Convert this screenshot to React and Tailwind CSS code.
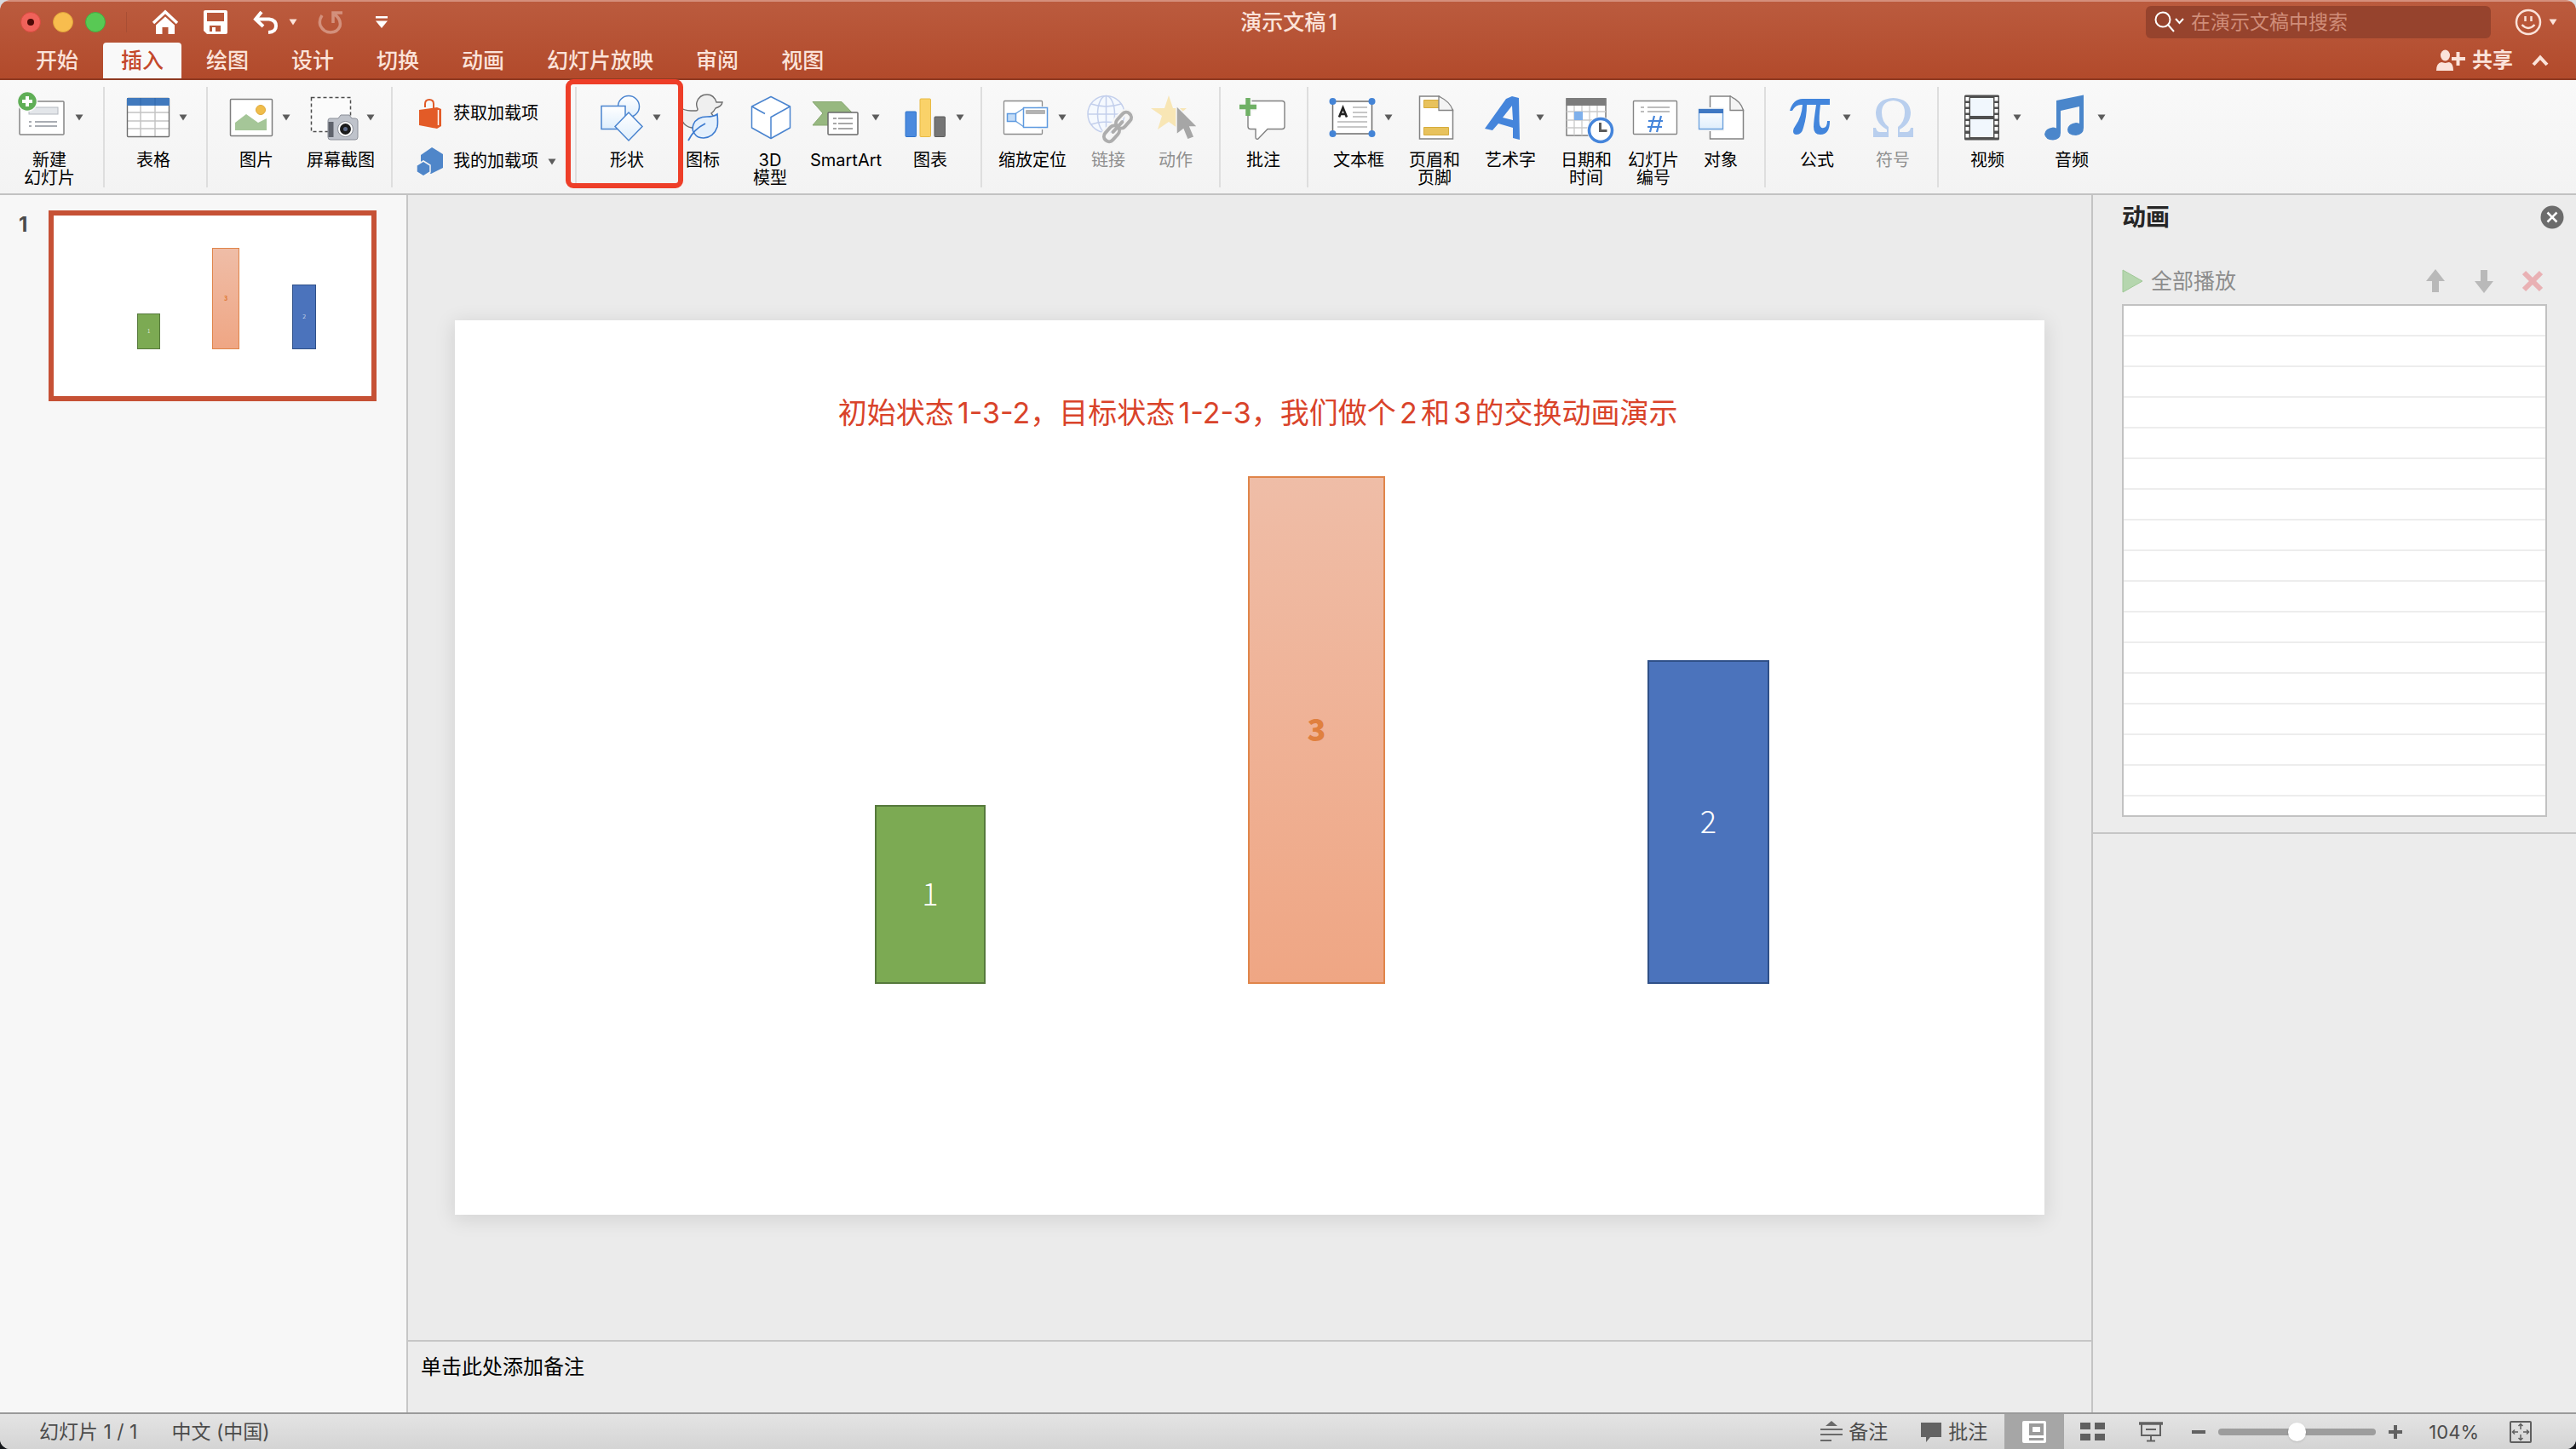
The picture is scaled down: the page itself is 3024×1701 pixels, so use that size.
import React from "react";

const FONT = "font-['Inter','Noto_Sans_CJK_SC',sans-serif]";

function Caret({ className = "text-[#5c5c5c]" }) {
  return (
    <svg width="10" height="8" viewBox="0 0 10 8" className={"shrink-0 " + className} aria-hidden="true">
      <path d="M0.5 0.5h9L5 7.5z" fill="currentColor" />
    </svg>
  );
}

function Icon({ children }) {
  return (
    <svg width="60" height="60" viewBox="0 0 60 60" className="shrink-0 overflow-visible" fill="none" aria-hidden="true">
      {children}
    </svg>
  );
}

/* ---------- ribbon icons (60 x 60 canvas) ---------- */

const icons = {
  newSlide: (
    <Icon>
      <rect x="5" y="11" width="52" height="39" rx="1" fill="#fff" stroke="#858585" strokeWidth="1.5" />
      <rect x="16" y="18" width="34" height="8" fill="#e3e6ea" stroke="#b4b9c0" />
      <path d="M16 35h3M23 35h26M16 40h3M23 40h26" stroke="#8d939a" strokeWidth="1.6" />
      <circle cx="14" cy="11" r="11.5" fill="#5fae56" stroke="#f7f7f7" strokeWidth="1.5" />
      <path d="M14 5v12M8 11h12" stroke="#fff" strokeWidth="4" />
    </Icon>
  ),
  table: (
    <Icon>
      <rect x="9.5" y="7.5" width="49" height="45" rx="1" fill="#fff" />
      <path d="M9 24h50M9 34h50M9 43h50M25 15v38M42 15v38" stroke="#c4c4c4" strokeWidth="1.5" />
      <rect x="9.5" y="7.5" width="49" height="45" rx="1" stroke="#6f6f6f" strokeWidth="1.4" />
      <rect x="9" y="7" width="50" height="9" fill="#4079bd" />
      <path d="M25 7v9M42 7v9" stroke="#2f68ac" />
    </Icon>
  ),
  picture: (
    <Icon>
      <rect x="9.5" y="8.5" width="49" height="43" rx="1" fill="#fff" stroke="#7e7e7e" strokeWidth="1.5" />
      <circle cx="45" cy="21" r="5.5" fill="#f0bd4b" stroke="#e0a93a" />
      <path d="M15 45V36L28 26 42 36 52 31V45z" fill="#a5c698" />
    </Icon>
  ),
  screenshot: (
    <Icon>
      <path d="M5.5 6.5h46v40h-46z" fill="#fbfbfb" stroke="#4d4d4d" strokeWidth="1.5" strokeDasharray="4 3" />
      <path d="M27 31h10l3-4h10l3 4h4q3 0 3 3v19q0 3-3 3H28q-3 0-3-3V34q0-3 2-3z" fill="#bfc3cb" stroke="#8b8f98" />
      <rect x="25.5" y="35" width="6" height="18" fill="#5f636c" />
      <circle cx="45.5" cy="43.5" r="9" fill="#fff" stroke="#8b8f98" />
      <circle cx="45.5" cy="43.5" r="6.5" fill="#1b1b1b" />
      <circle cx="45.5" cy="43.5" r="2.5" fill="#5d6a88" />
    </Icon>
  ),
  shapes: (
    <Icon>
      <defs>
        <linearGradient id="pale" x1="0" y1="0" x2="0" y2="1">
          <stop offset="0" stopColor="#fff" />
          <stop offset="1" stopColor="#dfeefc" />
        </linearGradient>
      </defs>
      <circle cx="42" cy="17" r="12.5" fill="url(#pale)" stroke="#4a84cf" strokeWidth="1.5" />
      <rect x="10" y="16.5" width="28" height="27" fill="url(#pale)" stroke="#4a84cf" strokeWidth="1.5" />
      <path d="M42 24L58 40.5 42 57 26 40.5z" fill="url(#pale)" stroke="#4a84cf" strokeWidth="1.5" />
    </Icon>
  ),
  icons: (
    <Icon>
      <path d="M2 17q6 5 14 5h6q2 0 2-2-2-5-1-8 3-9 12-9 8 0 11 9h7q-1 5-8 7-2 4-5 6l3 4-21 12-5 1q-14-2-15-25z" fill="#efefef" stroke="#6f6f6f" strokeWidth="1.4" />
      <path d="M47 26q1 10 0 15-4 12-16 13-6 0-9-3-6-6-3-13 4-9 16-9 8 0 12-3z" fill="#e4f0fc" stroke="#3c7bd0" strokeWidth="1.6" />
      <path d="M13 57q6-13 20-20" stroke="#3c7bd0" strokeWidth="1.8" />
    </Icon>
  ),
  model: (
    <Icon>
      <path d="M31 5.5L53.5 17v25L31 54.5 8.500 42V17z" fill="#fff" stroke="#4a84cf" strokeWidth="1.5" strokeLinejoin="round" />
      <path d="M53.5 17L31 29.5v25M8.5 17L24 25.5" stroke="#4a84cf" strokeWidth="1.5" />
    </Icon>
  ),
  smartArt: (
    <Icon>
      <path d="M1 11.5h34L48 25v14H1l12-14z" fill="#97b880" stroke="#87a871" />
      <rect x="19" y="24" width="35" height="26" rx="1" fill="#fff" stroke="#6a6a6a" strokeWidth="1.5" />
      <path d="M25 31h4M31 31h17M25 37h4M31 37h17M25 43h4M31 43h17" stroke="#8a8a8a" strokeWidth="1.5" />
    </Icon>
  ),
  chart: (
    <Icon>
      <rect x="11" y="23" width="12.5" height="29.5" rx="1" fill="#4b8ade" stroke="#2f74cb" />
      <rect x="28" y="8" width="12.5" height="44.5" rx="1" fill="#fad269" stroke="#e8ba44" />
      <rect x="45" y="29" width="12.5" height="23.5" rx="1" fill="#757575" stroke="#5b5b5b" />
    </Icon>
  ),
  zoomPlace: (
    <Icon>
      <rect x="6.5" y="10.5" width="45" height="39" rx="1" fill="#fff" stroke="#8b8b8b" strokeWidth="1.3" />
      <path d="M46 17h10v27H46z" fill="#f6f6f6" />
      <path d="M20 25.5L30 19v22l-10-7z" fill="#fff" stroke="#6aa0dd" strokeWidth="1.4" />
      <rect x="10.5" y="25.5" width="10" height="9" fill="#c3dcf7" stroke="#5e9ae0" strokeWidth="1.5" />
      <rect x="29.5" y="18.5" width="28" height="23" fill="#fff" stroke="#5e9ae0" strokeWidth="1.5" />
      <rect x="32" y="21" width="23" height="5" rx="1" fill="#b3b3b3" />
    </Icon>
  ),
  link: (
    <Icon>
      <g stroke="#c3cfec" strokeWidth="1.5">
        <circle cx="27.5" cy="26" r="21.5" fill="#f5f9fe" />
        <path d="M27.5 4.5v43M6 26h43M10 14q17 6 35 0M10 38q17-6 35 0" />
        <ellipse cx="27.5" cy="26" rx="10" ry="21.5" />
      </g>
      <g transform="rotate(-48 41 41)" stroke="#f5f5f5" strokeWidth="8">
        <rect x="20" y="35" width="22" height="12" rx="6" />
        <rect x="40" y="35" width="22" height="12" rx="6" />
      </g>
      <g transform="rotate(-48 41 41)" stroke="#adadad" strokeWidth="4">
        <rect x="20" y="35" width="21" height="12" rx="6" />
        <rect x="41" y="35" width="21" height="12" rx="6" />
        <path d="M33 41h16" strokeLinecap="round" />
      </g>
    </Icon>
  ),
  action: (
    <Icon>
      <path d="M22 4l5 15h16L31 29l5 16-14-10-13 9 5-16L1 19h16z" fill="#f8e6b5" />
      <path d="M31 16v34l8-6 5 12 8-3-5-12h9z" fill="#a6a6a6" stroke="#f6f6f6" strokeWidth="1.5" />
    </Icon>
  ),
  comment: (
    <Icon>
      <path d="M16 10.5h36q3 0 3 3v27q0 3-3 3H35L24 55q-3 1-3-2v-9.5h-6q-3 0-3-3V27" fill="#fff" stroke="#808080" strokeWidth="1.4" />
      <path d="M12 7v21M2 17.5h20" stroke="#f6f6f6" strokeWidth="9" />
      <path d="M12 7v21M2 17.5h20" stroke="#6fb065" strokeWidth="5.5" />
    </Icon>
  ),
  textBox: (
    <Icon>
      <rect x="9.5" y="11" width="46" height="38" fill="#fff" stroke="#6e6e6e" strokeWidth="1.5" />
      <path d="M33 18h17M33 24h17M33 29h17M15 35h35M15 41h35" stroke="#b5b5b5" strokeWidth="1.5" />
      <path d="M17 29.5L21.5 18.5 26 29.5M18.5 26h6.5" stroke="#222" strokeWidth="2.6" />
      <g fill="#4484d6">
        <circle cx="9.5" cy="11" r="4" /><circle cx="55.5" cy="11" r="4" />
        <circle cx="9.5" cy="49" r="4" /><circle cx="55.5" cy="49" r="4" />
      </g>
    </Icon>
  ),
  headerFooter: (
    <Icon>
      <path d="M12.5 5h23L51.5 21v34h-39z" fill="#fff" stroke="#838383" strokeWidth="1.5" />
      <path d="M17.5 9.5h18v9h-18zM17.5 41.5h29v9h-29z" fill="#e8c25c" stroke="#d6ac3c" />
      <path d="M35 5v16.5h16.5q-3-10-16.5-16.5z" fill="#f4f4f4" stroke="#838383" strokeWidth="1.3" />
    </Icon>
  ),
  wordArt: (
    <Icon>
      <path fillRule="evenodd" d="M42 5l8 2 1 49-8-2V42L26 37l-7 8-9-2L35 8zM42 16L31 30l12 3z" fill="#4585db" />
    </Icon>
  ),
  dateTime: (
    <Icon>
      <rect x="7" y="8" width="46" height="43" fill="#fff" stroke="#7e7e7e" strokeWidth="1.5" />
      <path d="M16 15v36M25 15v36M34 15v36M43 15v36M7 23h46M7 33h46M7 42h46" stroke="#cacaca" strokeWidth="1.3" />
      <rect x="6.5" y="7" width="47" height="9" fill="#7c7c7c" />
      <rect x="16" y="23" width="10" height="10" fill="#7fb0eb" />
      <circle cx="47" cy="45" r="16" fill="#f6f6f6" />
      <circle cx="47" cy="45" r="13.5" fill="#fff" stroke="#4585db" strokeWidth="3.5" />
      <path d="M46.5 36v9.5h8" stroke="#5b5b5b" strokeWidth="3" />
    </Icon>
  ),
  slideNumber: (
    <Icon>
      <rect x="6.5" y="10.5" width="51" height="39" rx="1" fill="#fff" stroke="#868686" strokeWidth="1.4" />
      <path d="M15 18h4M23 18h26M15 23h4M23 23h26" stroke="#a8a8a8" strokeWidth="1.5" />
      <path d="M31 28l-5 19M39 28l-5 19M24 34h17M23 41h17" stroke="#4585db" strokeWidth="2.2" />
    </Icon>
  ),
  object: (
    <Icon>
      <path d="M17.5 5h24L56.5 21v34h-39z" fill="#fff" stroke="#838383" strokeWidth="1.5" />
      <path d="M41 5v16.5h15.5q-3-11-15.5-16.5z" fill="#f4f4f4" stroke="#838383" strokeWidth="1.3" />
      <path d="M2 18h32v28H2z" fill="#f6f6f6" />
      <path d="M4.5 20.5h28v23h-28z" fill="url(#pale)" stroke="#6aa0dd" strokeWidth="1.3" />
      <path d="M4 20h29v5H4z" fill="#3f78c3" />
    </Icon>
  ),
  equation: (
    <Icon>
      <path d="M8 22Q12 8 23 8H55v7H44q-2 15-1 23 1 5 5 4 4-1 4-8h3q0 16-11 16-8 0-8-9 0-6 3-26H28q0 14-4 27-2 8-8 8-4 0-4-4 0-3 3-7 7-10 8-24-8-1-12 7z" fill="#4285dc" />
    </Icon>
  ),
  symbol: (
    <Icon>
      <path d="M7 53V42h3q1 5 5 5h8V44Q10 37 10 24 11 8 30.5 7 50 8 51 24q0 13-13 20v3h8q4 0 5-5h3v11H36V41q8-6 8-17 0-13-13.5-14Q17 11 17 24q0 11 8 17v12z" fill="#b9cfee" />
    </Icon>
  ),
  video: (
    <Icon>
      <rect x="13" y="3.5" width="41" height="53" rx="1.5" fill="#4f4f4f" />
      <path d="M20 7h27v21H20zM20 32h27v21H20z" fill="#f1f7fd" />
      <g fill="#fff">
        {[6, 13, 20, 27, 34, 41, 49].map((y) => (
          <g key={y}>
            <rect x="14.5" y={y} width="4" height="4.5" />
            <rect x="48.5" y={y} width="4" height="4.5" />
          </g>
        ))}
      </g>
    </Icon>
  ),
  audio: (
    <Icon>
      <path d="M22 10L54 3.5V42q0 8-9 9-10 0-10-7 1-7 10-8 2 0 4 1V17L27 22v26q0 8-9 8.5-9-.5-10-7 1-7 10-8 2 0 4 1z" fill="#4a86cb" />
    </Icon>
  ),
};

function Tool({ icon, label, menu, disabled }) {
  const lines = label.split("\n");
  return (
    <button
      type="button"
      disabled={disabled}
      className={"flex shrink-0 flex-col items-center gap-[10px] " + (menu ? "w-[80px]" : "w-[60px]")}
    >
      <span className="flex items-center gap-[10px]">
        {icons[icon]}
        {menu && <Caret />}
      </span>
      <span className={"whitespace-nowrap text-center text-[20px] leading-[21px] " + (disabled ? "text-[#8f8f8f]" : "text-black")}>
        {lines.map((l) => (
          <span key={l} className="block">{l}</span>
        ))}
      </span>
    </button>
  );
}

function Group({ pad, last, children }) {
  return (
    <div className={"flex items-start gap-[19px] pt-[6px] " + (last ? "" : "border-r-2 border-[#dedede] ") + pad}>
      {children}
    </div>
  );
}

function TitleBar() {
  return (
    <div className="flex h-[48px] items-center justify-between text-[#fbe3da]">
      <div className="flex flex-1 items-center pl-[24px]">
        <div className="flex gap-[14px]">
          <button type="button" aria-label="关闭" className="flex h-6 w-6 items-center justify-center rounded-full border border-[#d94a40] bg-[#f0625a]">
            <span className="h-2 w-2 rounded-full bg-[#4d0b07]" />
          </button>
          <button type="button" aria-label="最小化" className="h-6 w-6 rounded-full border border-[#dea23a] bg-[#f8bd4e]" />
          <button type="button" aria-label="缩放" className="h-6 w-6 rounded-full border border-[#46a93f] bg-[#58c954]" />
        </div>
        <span className="ml-[24px] h-6 w-px bg-[#a84e34]" />
        <button type="button" aria-label="主页" className="ml-[29px]">
          <svg width="32" height="30" viewBox="0 0 32 30" aria-hidden="true">
            <path d="M2 16L16 3l14 13" fill="none" stroke="#fff" strokeWidth="3.5" />
            <path d="M5 18.5L16 8.500l11 10V29h-7.500v-8h-7v8H5z" fill="#fff" />
          </svg>
        </button>
        <button type="button" aria-label="保存" className="ml-[29px]">
          <svg width="28" height="28" viewBox="0 0 28 28" aria-hidden="true">
            <path fillRule="evenodd" d="M2 0h24q2 0 2 2v24q0 2-2 2H4l-4-4V2Q0 0 2 0zM4 3v10h20V3zM7 18v7h3v-5h4v5h6v-7z" fill="#fff" />
          </svg>
        </button>
        <button type="button" aria-label="撤消" className="ml-[30px] flex items-center gap-[12px] text-white">
          <svg width="30" height="28" viewBox="0 0 30 28" fill="none" stroke="currentColor" strokeWidth="4" aria-hidden="true">
            <path d="M10 2L3 10.500l9 8.500M4 10.500h15q8 1 8 8 0 7-9 7.500" />
          </svg>
          <Caret className="text-[#fbe3da]" />
        </button>
        <button type="button" aria-label="重做" disabled className="ml-[24px] text-[#d3907c]">
          <svg width="30" height="28" viewBox="0 0 30 28" fill="none" stroke="currentColor" strokeWidth="3.5" aria-hidden="true">
            <path d="M5 6Q1 12 3 18q4 8 12 8 8 0 11-7 2-8-6-14M18 15V3h11" />
          </svg>
        </button>
        <button type="button" aria-label="自定义工具栏" className="ml-[38px]">
          <svg width="14" height="14" viewBox="0 0 14 14" fill="#fff" aria-hidden="true">
            <path d="M0 0h14v2.500H0zM0 5.500h14L7 14z" />
          </svg>
        </button>
      </div>
      <h1 className="text-[25px] font-medium leading-[30px] [text-autospace:normal]">演示文稿1</h1>
      <div className="flex flex-1 items-center justify-end pr-[22px]">
        <label className="flex h-[38px] w-[405px] items-center rounded-md bg-[#96432d] pl-[10px]">
          <svg width="36" height="26" viewBox="0 0 36 26" fill="none" stroke="#fff" strokeWidth="2" aria-hidden="true">
            <circle cx="10" cy="10" r="8.5" />
            <path d="M16 16l7 8M25 9l4.500 5L34 9" />
          </svg>
          <input
            type="search"
            aria-label="搜索"
            placeholder="在演示文稿中搜索"
            className="ml-[7px] min-w-0 flex-1 bg-transparent text-[23px] text-white outline-none placeholder:text-[#d08d79]"
          />
        </label>
        <button type="button" aria-label="反馈" className="ml-[28px] flex items-center gap-[8px]">
          <svg width="32" height="32" viewBox="0 0 32 32" fill="none" stroke="currentColor" strokeWidth="2.5" aria-hidden="true">
            <circle cx="16" cy="16" r="14" />
            <path d="M12.500 9v6M19.500 9v6M8.500 19q7.500 8 15 0" />
          </svg>
          <Caret className="text-[#fbe3da]" />
        </button>
      </div>
    </div>
  );
}

const tabs = ["开始", "插入", "绘图", "设计", "切换", "动画", "幻灯片放映", "审阅", "视图"];

function TabBar() {
  return (
    <nav className="flex items-end justify-between pl-[21px] pr-[32px] text-[#fbe3da]">
      <div className="flex gap-[8px]">
        {tabs.map((t) => (
          <button
            key={t}
            type="button"
            className={
              "h-[42px] rounded-t px-[21px] text-[25px] font-medium leading-[30px] " +
              (t === "插入" ? "bg-[#f9f9f9] text-[#c4482b]" : "")
            }
          >
            {t}
          </button>
        ))}
      </div>
      <div className="flex h-[42px] items-center gap-[22px]">
        <button type="button" className="flex items-center gap-[8px] text-[24px] font-bold leading-[30px]">
          <svg width="34" height="26" viewBox="0 0 34 26" fill="currentColor" aria-hidden="true">
            <ellipse cx="10.5" cy="7" rx="5.5" ry="6.5" />
            <path d="M0 25q0-9 6-10l4.500 1 4.500-1q5 1 5 10zM23.500 3h4v6H34v4h-6.500v6h-4v-6H18V9h5.500z" />
          </svg>
          共享
        </button>
        <button type="button" aria-label="折叠功能区">
          <svg width="20" height="14" viewBox="0 0 20 14" fill="none" stroke="currentColor" strokeWidth="4" aria-hidden="true">
            <path d="M2 12l8-8.500L18 12" />
          </svg>
        </button>
      </div>
    </nav>
  );
}

function Ribbon() {
  return (
    <div className="relative flex items-stretch border-b-2 border-[#c2c2c2] bg-[#f5f5f5] bg-linear-to-b from-[#f9f9f9] to-[#f3f3f3] pb-[7px] pt-[8px]">
      <Group pad="pl-[18px] pr-[23px]">
        <Tool icon="newSlide" label={"新建\n幻灯片"} menu />
      </Group>
      <Group pad="pl-[17px] pr-[22px]">
        <Tool icon="table" label="表格" menu />
      </Group>
      <Group pad="pl-[17px] pr-[19px]">
        <Tool icon="picture" label="图片" menu />
        <Tool icon="screenshot" label="屏幕截图" menu />
      </Group>
      <Group pad="pl-[28px] pr-[22px]">
        <div className="flex flex-col gap-[21px] pt-[8px] text-[20px] leading-[21px]">
          <button type="button" className="flex h-[35px] items-center gap-[11px]">
            <svg width="32" height="38" viewBox="0 0 32 38" className="shrink-0" aria-hidden="true">
              <path d="M10 11V7q0-5 5-5t5 5v5" fill="none" stroke="#e05a27" strokeWidth="2" />
              <path d="M3 14l21-3v25L3 32z" fill="#e35b27" />
              <path d="M24 11l5 2v20l-5 3z" fill="#e35b27" />
              <path d="M25.500 14v18" stroke="#fff" strokeWidth="1.5" />
            </svg>
            获取加载项
          </button>
          <button type="button" className="flex h-[35px] items-center gap-[11px]">
            <svg width="32" height="36" viewBox="0 0 32 36" className="shrink-0" aria-hidden="true">
              <path d="M18 1l13 8v16l-14 7-12-7V10z" fill="#4f86c9" />
              <path d="M8 17l8 5v8l-8 5-8-5v-8z" fill="#4f86c9" stroke="#f5f5f5" strokeWidth="1.5" />
            </svg>
            我的加载项
            <Caret />
          </button>
        </div>
      </Group>
      <Group pad="pl-[19px] pr-[19px]">
        <Tool icon="shapes" label="形状" menu />
        <Tool icon="icons" label="图标" />
        <Tool icon="model" label={"3D\n模型"} />
        <Tool icon="smartArt" label="SmartArt" menu />
        <Tool icon="chart" label="图表" menu />
      </Group>
      <Group pad="pl-[19px] pr-[21px]">
        <Tool icon="zoomPlace" label="缩放定位" menu />
        <Tool icon="link" label="链接" disabled />
        <Tool icon="action" label="动作" disabled />
      </Group>
      <Group pad="pl-[20px] pr-[21px]">
        <Tool icon="comment" label="批注" />
      </Group>
      <Group pad="pl-[19px] pr-[21px]">
        <Tool icon="textBox" label="文本框" menu />
        <Tool icon="headerFooter" label={"页眉和\n页脚"} />
        <Tool icon="wordArt" label="艺术字" menu />
        <Tool icon="dateTime" label={"日期和\n时间"} />
        <Tool icon="slideNumber" label={"幻灯片\n编号"} />
        <Tool icon="object" label="对象" />
      </Group>
      <Group pad="pl-[20px] pr-[22px]">
        <Tool icon="equation" label="公式" menu />
        <Tool icon="symbol" label="符号" disabled />
      </Group>
      <Group pad="pl-[17px]" last>
        <Tool icon="video" label="视频" menu />
        <Tool icon="audio" label="音频" menu />
      </Group>
      <div className="pointer-events-none absolute -top-px left-[664px] h-[128px] w-[138px] rounded-[9px] border-[6px] border-[#ee3e28]" />
    </div>
  );
}

function SlideCanvas({ small }) {
  const size = small ? "text-[7px]" : "pb-[6px] text-[36px]";
  const edge = small ? "border" : "border-2";
  return (
    <div className="relative aspect-video w-full bg-white font-['Noto_Sans_CJK_SC',sans-serif]">
      {!small && (
        <p className="absolute left-[24.1%] top-[8%] whitespace-nowrap font-['Inter','Noto_Sans_CJK_SC',sans-serif] text-[34px] leading-[50px] text-[#d9432a] [text-autospace:normal]">
          初始状态1-3-2，目标状态1-2-3，我们做个2和3的交换动画演示
        </p>
      )}
      <div className={"absolute left-[26.4%] top-[54.2%] flex h-[20%] w-[7%] items-center justify-center border-[#56793c] bg-[#7caa53] font-light text-white " + size + " " + edge}>
        1
      </div>
      <div className={"absolute left-[49.9%] top-[17.4%] flex h-[56.8%] w-[8.6%] items-center justify-center border-[#e0854a] bg-linear-to-b from-[#efbda7] to-[#efa684] font-black text-[#e0803f] " + size + " " + edge}>
        3
      </div>
      <div className={"absolute left-[75%] top-[38%] flex h-[36.2%] w-[7.7%] items-center justify-center border-[#2f5088] bg-[#4b73bc] font-light text-white " + size + " " + edge}>
        2
      </div>
    </div>
  );
}

function AnimationPane() {
  return (
    <aside className="flex w-[569px] shrink-0 flex-col border-l-2 border-[#c4c4c4] bg-[#ececec]">
      <div className="border-b-2 border-[#c6c6c6] pb-[18px] pl-[34px] pr-[34px]">
        <div className="-mr-[20px] flex h-[52px] items-center justify-between">
          <h2 className="text-[28px] font-bold leading-[36px] text-[#262626]">动画</h2>
          <button type="button" aria-label="关闭窗格">
            <svg width="28" height="28" viewBox="0 0 28 28" aria-hidden="true">
              <circle cx="14" cy="14" r="13.5" fill="#6c6c6c" />
              <path d="M8.500 8.500l11 11M19.500 8.500l-11 11" stroke="#fff" strokeWidth="2.5" />
            </svg>
          </button>
        </div>
        <div className="mt-[31px] flex h-[36px] items-center justify-between">
          <button type="button" disabled className="flex items-center gap-[9px] text-[25px] leading-[36px] text-[#8c8c8c]">
            <svg width="25" height="28" viewBox="0 0 25 28" aria-hidden="true">
              <path d="M1 1l23 13L1 27z" fill="#b5d6ae" stroke="#9fc896" />
            </svg>
            全部播放
          </button>
          <div className="flex items-center gap-[33px] pr-[5px]">
            <button type="button" disabled aria-label="上移">
              <svg width="24" height="28" viewBox="0 0 24 28" fill="#b9b9b9" aria-hidden="true">
                <path d="M12 0l11 14h-7v13H8V14H1z" />
              </svg>
            </button>
            <button type="button" disabled aria-label="下移">
              <svg width="24" height="28" viewBox="0 0 24 28" fill="#b9b9b9" aria-hidden="true">
                <path d="M12 28L1 14h7V1h8v13h7z" />
              </svg>
            </button>
            <button type="button" disabled aria-label="删除">
              <svg width="24" height="26" viewBox="0 0 24 26" stroke="#e9b1b4" strokeWidth="6" aria-hidden="true">
                <path d="M2 3l20 20M22 3L2 23" />
              </svg>
            </button>
          </div>
        </div>
        <ul className="mt-[9px] overflow-hidden border-2 border-[#c2c2c2] bg-white" aria-label="动画列表">
          {Array.from({ length: 17 }, (_, i) => (
            <li key={i} className={i === 16 ? "h-[22px]" : "h-[36px] border-b-2 border-[#ededed]"} />
          ))}
        </ul>
      </div>
    </aside>
  );
}

function StatusBar() {
  return (
    <footer className="flex h-[43px] shrink-0 items-center justify-between border-t-2 border-[#9a9a9a] bg-linear-to-b from-[#e4e4e4] to-[#d4d4d4] pl-[46px] pr-[52px] text-[23px] leading-[30px] text-[#4c4c4c]">
      <div className="flex items-center gap-[40px]">
        <span>幻灯片 1 / 1</span>
        <span>中文 (中国)</span>
      </div>
      <div className="flex h-full items-center">
        <button type="button" className="flex items-center gap-[7px]">
          <svg width="26" height="26" viewBox="0 0 26 26" fill="#6a6a6a" aria-hidden="true">
            <path d="M13 0l7 6H6zM0 9h26v2H0zM0 15h26v2H0zM0 22h13v2H0z" />
          </svg>
          备注
        </button>
        <button type="button" className="ml-[38px] flex items-center gap-[7px]">
          <svg width="26" height="24" viewBox="0 0 26 24" fill="#636363" aria-hidden="true">
            <path d="M1 1h24v17H12l-5 6v-6H1z" />
          </svg>
          批注
        </button>
        <button type="button" aria-label="普通视图" className="ml-[20px] flex h-full w-[70px] items-center justify-center bg-[#a6a6a6]">
          <svg width="28" height="26" viewBox="0 0 28 26" aria-hidden="true">
            <rect width="28" height="26" rx="2" fill="#fff" />
            <path d="M8 3h17v14H8zM8 20h17v3H8z" fill="#9b9b9b" />
            <path d="M12 7h9v6h-9z" fill="#fff" />
          </svg>
        </button>
        <button type="button" aria-label="幻灯片浏览" className="ml-[19px]">
          <svg width="30" height="22" viewBox="0 0 30 22" fill="#606060" aria-hidden="true">
            <path d="M0 0h12v8H0zM17 0h12v8H17zM0 13h12v8H0zM17 13h12v8H17z" />
          </svg>
        </button>
        <button type="button" aria-label="幻灯片放映" className="ml-[39px]">
          <svg width="28" height="24" viewBox="0 0 28 24" fill="none" stroke="#626262" strokeWidth="2" aria-hidden="true">
            <path d="M0 2h28" strokeWidth="3.5" />
            <path d="M3 3v13h22V3M8 9h12M14 16v6M9 22.500h10" />
          </svg>
        </button>
        <button type="button" aria-label="缩小" className="ml-[34px]">
          <svg width="16" height="4" viewBox="0 0 16 4" aria-hidden="true"><path d="M0 0h16v4H0z" fill="#616161" /></svg>
        </button>
        <input
          type="range"
          aria-label="缩放比例"
          min="0"
          max="100"
          defaultValue="50"
          className="ml-[15px] h-2 w-[185px] appearance-none rounded-full bg-[#9d9d9d] [&::-webkit-slider-thumb]:h-[22px] [&::-webkit-slider-thumb]:w-[21px] [&::-webkit-slider-thumb]:appearance-none [&::-webkit-slider-thumb]:rounded-full [&::-webkit-slider-thumb]:bg-white [&::-webkit-slider-thumb]:shadow"
        />
        <button type="button" aria-label="放大" className="ml-[15px]">
          <svg width="16" height="16" viewBox="0 0 16 16" aria-hidden="true"><path d="M6 0h4v6h6v4h-6v6H6v-6H0V6h6z" fill="#616161" /></svg>
        </button>
        <span className="ml-[31px] text-[22px]">104%</span>
        <button type="button" aria-label="适应窗口" className="ml-[36px]">
          <svg width="26" height="26" viewBox="0 0 26 26" fill="none" stroke="#5f5f5f" strokeWidth="2" aria-hidden="true">
            <rect x="1" y="1" width="24" height="24" rx="1" />
            <path d="M13 4v6M13 16v6M4 13h6M16 13h6M10.500 6L13 3.500 15.500 6M10.500 20l2.500 2.500 2.500-2.500M6 10.500L3.500 13 6 15.500M20 10.500l2.500 2.500-2.500 2.500" strokeWidth="1.5" />
          </svg>
        </button>
      </div>
    </footer>
  );
}

export default function App() {
  return (
    <div className="min-h-screen bg-linear-to-b from-[#d9dbe0] to-[#16181c]">
      <div className={"flex min-h-screen flex-col overflow-hidden rounded-xl bg-[#ececec] " + FONT}>
        <header className="border-b-2 border-[#8f3a22] border-t-2 border-t-[#d58f7c] bg-linear-to-b from-[#bb5b3e] to-[#b24a2b]">
          <TitleBar />
          <TabBar />
        </header>
        <Ribbon />
        <div className="flex flex-1">
          <aside className="flex w-[479px] shrink-0 items-start border-r-2 border-[#c6c6c6] bg-[#f7f7f7] pl-[22px] pr-[35px] pt-[18px]">
            <span className="w-[35px] shrink-0 text-[24px] font-bold leading-[34px] text-[#4b4b4b]">1</span>
            <button type="button" aria-label="幻灯片 1" className="flex-1 border-[6px] border-[#c65135] bg-white py-px">
              <SlideCanvas small />
            </button>
          </aside>
          <main className="flex min-w-0 flex-1 flex-col">
            <div className="flex flex-1 items-center bg-[#ebebeb] px-[55px]">
              <div className="w-full shadow-[0_4px_22px_2px_rgba(0,0,0,0.10)]">
                <SlideCanvas />
              </div>
            </div>
            <textarea
              aria-label="备注"
              placeholder="单击此处添加备注"
              className="block h-[85px] w-full resize-none border-t-2 border-[#c6c6c6] bg-[#ececec] px-[15px] pt-[14px] text-[24px] leading-[32px] outline-none placeholder:text-black"
            />
          </main>
          <AnimationPane />
        </div>
        <StatusBar />
      </div>
    </div>
  );
}
